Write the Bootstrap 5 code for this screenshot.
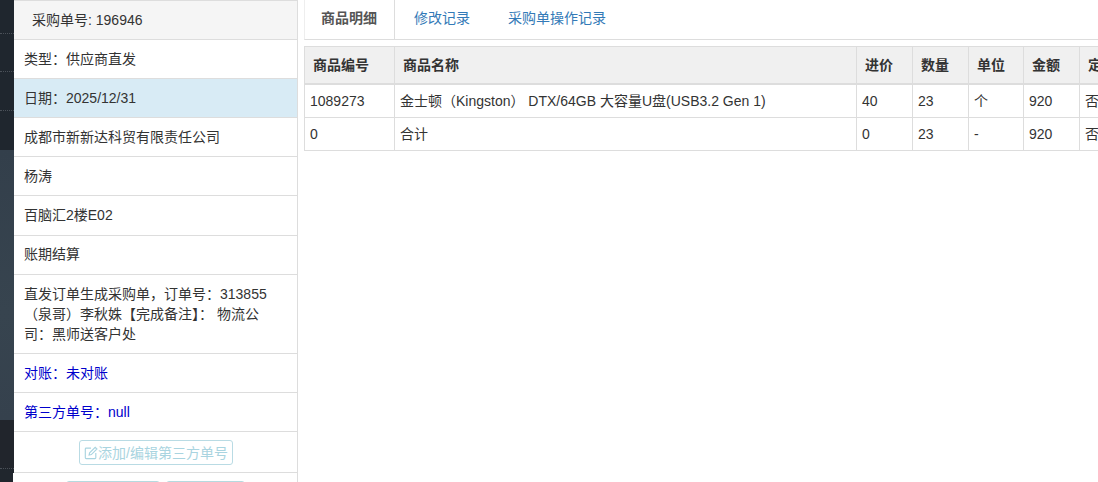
<!DOCTYPE html>
<html lang="zh">
<head>
<meta charset="utf-8">
<title>采购单</title>
<link href="https://cdn.jsdelivr.net/npm/bootstrap@5.3.0/dist/css/bootstrap.min.css" rel="stylesheet">
<style>
html,body{height:482px;overflow:hidden;background:#fff}
body{font-family:"Liberation Sans","Noto Sans CJK SC",Arial,sans-serif;font-size:14px;line-height:20px;color:#333}
.page-shell{height:482px;overflow:hidden}
.side-strip{width:14px;flex:none;height:482px;background:#20262d;display:flex;flex-direction:column}
.strip-top{height:150px;flex:none;background:#1f262e;display:flex;flex-direction:column}
.strip-link{height:38.5px;flex:none;border-bottom:1px dotted #4a5058;margin-top:-5px;padding-top:5px}
.strip-link+.strip-link{margin-top:0;padding-top:0}
.strip-open{height:270px;flex:none;background:linear-gradient(#333f4b,#37444f 60%,#35414d)}
.strip-foot{height:49px;flex:none;border-bottom:1px dotted #4a5058;background:#21252c}
.info-col{width:284px;flex:none}
.info-list{border-radius:0;--bs-list-group-border-color:#ddd;--bs-list-group-color:#333;--bs-list-group-border-radius:0}
.info-list .list-group-item{padding:9px 10px;line-height:20px;border-left:0;color:#333}
.info-list .list-group-item.head-item{background:#f5f5f5;padding:9px 18px 9px;height:40px}
.info-list .list-group-item.date-item{background:#d8ebf5}
.info-list .list-group-item.tall-item{padding-bottom:10px}
.info-list .list-group-item.tight-item{padding-top:8px;padding-bottom:10px}
.info-list .list-group-item.note-item{padding-right:14px}
.info-list .list-group-item.blue-item{color:#00c}
.info-list .list-group-item.btn-item{text-align:center;padding:8px 10px 6px 11px;height:41px}
.info-list .list-group-item.btn-last{padding:8px 0 0;height:30px;border-bottom:0;display:flex;justify-content:center;gap:6px;margin-left:-1px}
.third-btn{--bs-btn-padding-y:1px;--bs-btn-padding-x:5px;--bs-btn-font-size:14px;--bs-btn-line-height:20px;--bs-btn-border-radius:3px;--bs-btn-disabled-bg:#fff;--bs-btn-disabled-border-color:#b9dbe4;--bs-btn-disabled-color:#a9d4e0;--bs-btn-disabled-opacity:1;height:25px;width:154px;white-space:nowrap;display:inline-flex;align-items:center;justify-content:center;gap:0}
.third-btn svg{flex:none}
.stub-a,.stub-b{--bs-btn-disabled-bg:#fff;--bs-btn-disabled-border-color:#b5dadf;--bs-btn-disabled-opacity:1;--bs-btn-border-radius:3px;height:26px;padding:0}
.stub-a{width:94px}
.stub-b{width:79px}
.main-col{flex:1 1 0;min-width:0;margin-left:6px;overflow:hidden}
.detail-tabs{--bs-nav-tabs-border-color:#ddd;--bs-nav-tabs-border-radius:0;--bs-nav-tabs-link-active-color:#555;--bs-nav-tabs-link-active-border-color:#ddd;height:40px;flex-wrap:nowrap;margin-bottom:6px}
.detail-tabs .nav-link{padding:8px 18px 11px 17px;height:40px;line-height:20px;color:#337ab7;border-top:0;font-size:14px}
.detail-tabs .nav-link.active{font-weight:700;color:#555;width:91px;padding-left:16px;padding-right:0;border-left-color:#eee}
.detail-tabs .nav-link:not(.active){border-color:transparent;padding-left:18px;padding-right:18px}
.goods-table{table-layout:fixed;width:850px;margin:0;--bs-table-border-color:#ddd;--bs-table-color:#333;border-color:#ddd}
.goods-table th{background:#f0f0f0;font-weight:700;padding:7px 8px 8px;height:37px;line-height:20px;border-bottom-width:2px;white-space:nowrap;--bs-table-bg:#f0f0f0;color:#333}
.goods-table td{padding:6px 5px;line-height:20px;height:33px;white-space:nowrap;color:#333}
.goods-table thead tr{border-bottom-width:0}
.table-clip{overflow:hidden}
</style>
</head>
<body>
<div class="page-shell d-flex">
  <div class="side-strip">
    <div class="strip-top">
      <div class="strip-link"></div>
      <div class="strip-link"></div>
      <div class="strip-link"></div>
    </div>
    <div class="strip-open"></div>
    <div class="strip-foot"></div>
  </div>
  <div class="info-col">
    <ul class="list-group info-list">
      <li class="list-group-item head-item">采购单号: 196946</li>
      <li class="list-group-item">类型：供应商直发</li>
      <li class="list-group-item date-item">日期：2025/12/31</li>
      <li class="list-group-item">成都市新新达科贸有限责任公司</li>
      <li class="list-group-item">杨涛</li>
      <li class="list-group-item tall-item">百脑汇2楼E02</li>
      <li class="list-group-item tight-item">账期结算</li>
      <li class="list-group-item note-item">直发订单生成采购单，订单号：313855（泉哥）李秋姝【完成备注】： 物流公司：黑师送客户处</li>
      <li class="list-group-item blue-item">对账：未对账</li>
      <li class="list-group-item blue-item">第三方单号：null</li>
      <li class="list-group-item btn-item">
        <button type="button" class="btn btn-info third-btn" disabled>
          <svg width="14" height="14" viewBox="0 0 16 16" fill="none" stroke="currentColor" stroke-width="1.3" aria-hidden="true"><path d="M8 2.5H2.5a1 1 0 0 0-1 1v10a1 1 0 0 0 1 1h10a1 1 0 0 0 1-1V8"/><path d="M5.8 10.4l.6-2.6 6.4-6.4 2 2-6.4 6.4z"/></svg>添加/编辑第三方单号
        </button>
      </li>
      <li class="list-group-item btn-last">
        <button type="button" class="btn btn-info stub-a" disabled aria-label="操作"></button>
        <button type="button" class="btn btn-info stub-b" disabled aria-label="操作"></button>
      </li>
    </ul>
  </div>
  <div class="main-col">
    <ul class="nav nav-tabs detail-tabs">
      <li class="nav-item"><a class="nav-link active" href="#">商品明细</a></li>
      <li class="nav-item"><a class="nav-link" href="#">修改记录</a></li>
      <li class="nav-item"><a class="nav-link" href="#">采购单操作记录</a></li>
    </ul>
    <div class="table-clip">
      <table class="table table-bordered goods-table">
        <colgroup><col style="width:90px"><col style="width:462px"><col style="width:56px"><col style="width:56px"><col style="width:55px"><col style="width:56px"><col style="width:75px"></colgroup>
        <thead>
          <tr><th>商品编号</th><th>商品名称</th><th>进价</th><th>数量</th><th>单位</th><th>金额</th><th>定制</th></tr>
        </thead>
        <tbody>
          <tr><td>1089273</td><td>金士顿（Kingston） DTX/64GB 大容量U盘(USB3.2 Gen 1)</td><td>40</td><td>23</td><td>个</td><td>920</td><td>否</td></tr>
          <tr><td>0</td><td>合计</td><td>0</td><td>23</td><td>-</td><td>920</td><td>否</td></tr>
        </tbody>
      </table>
    </div>
  </div>
</div>
<script src="https://cdn.jsdelivr.net/npm/bootstrap@5.3.0/dist/js/bootstrap.bundle.min.js"></script>
</body>
</html>
